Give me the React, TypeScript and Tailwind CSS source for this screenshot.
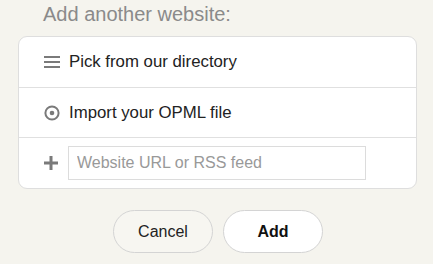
export default function App() {
  return (
    <div className="h-[264px] w-[433px] overflow-hidden bg-[#f5f4ee] font-['Liberation_Sans',Arial,sans-serif]">
      <div className="pl-[43px] pt-[1px] text-[20px] leading-[26px] text-[#8a8a8a]">
        Add another website:
      </div>

      {/* Options card */}
      <div className="mx-[18px] mt-[9px] w-[399px] rounded-[9px] border border-[#dedede] bg-white">
        <div className="flex h-[51px] items-center border-b border-[#e0e0e0] pl-[25px] text-[16.8px] text-[#222]">
          <svg width="16" height="12" viewBox="0 0 16 12" className="mr-[9px]">
            <rect x="0" y="0" width="16" height="2" fill="#7a7a7a" />
            <rect x="0" y="5" width="16" height="2" fill="#7a7a7a" />
            <rect x="0" y="10" width="16" height="2" fill="#7a7a7a" />
          </svg>
          Pick from our directory
        </div>
        <div className="flex h-[50px] items-center border-b border-[#e0e0e0] pl-[25px] text-[16.8px] text-[#222]">
          <svg width="16" height="16" viewBox="0 0 16 16" className="mr-[9px]">
            <circle cx="8" cy="8" r="6.6" fill="none" stroke="#7a7a7a" strokeWidth="2" />
            <circle cx="8" cy="8" r="2.3" fill="#7a7a7a" />
          </svg>
          Import your OPML file
        </div>
        <div className="flex h-[50px] items-center pl-[25px]">
          <svg width="14" height="14" viewBox="0 0 14 14" className="mr-[10px]">
            <rect x="0" y="5.5" width="14" height="3" fill="#7a7a7a" />
            <rect x="5.5" y="0" width="3" height="14" fill="#7a7a7a" />
          </svg>
          <input
            className="h-[34px] w-[298px] border border-[#dcdcdc] bg-white px-[8px] text-[16px] text-[#222] placeholder:text-[#999] outline-none"
            placeholder="Website URL or RSS feed"
          />
        </div>
      </div>

      <div className="mt-[21px] flex justify-center gap-[10px] pl-[3px]">
        <button className="h-[43px] w-[100px] rounded-full border border-[#d4d4d4] bg-[#f7f6f1] text-[16px] text-[#222]">
          Cancel
        </button>
        <button className="h-[43px] w-[100px] rounded-full border border-[#d4d4d4] bg-white text-[16px] font-bold text-[#111]">
          Add
        </button>
      </div>
    </div>
  );
}
